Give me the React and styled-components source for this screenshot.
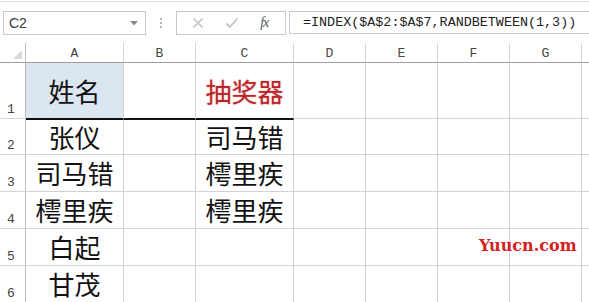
import React from "react";
import styled, { createGlobalStyle } from "styled-components";

const GlobalStyle = createGlobalStyle`
  html, body {
    margin: 0;
    padding: 0;
    background: #fff;
    overflow: hidden;
  }
  body {
    font-family: "Noto Sans CJK SC", "Noto Sans", sans-serif;
  }
`;

const columns = ["A", "B", "C", "D", "E", "F", "G"];
const colWidths = [98, 72, 98, 72, 72, 72, 72];
const rowHeights = [56, 36, 37, 37, 37, 37];

const data = [
  ["姓名", "", "抽奖器"],
  ["张仪", "", "司马错"],
  ["司马错", "", "樗里疾"],
  ["樗里疾", "", "樗里疾"],
  ["白起", "", ""],
  ["甘茂", "", ""],
];

function Sheet() {
  return (
    <Page>
      <GlobalStyle />
      <Toolbar>
        <NameBox>
          <span>C2</span>
          <svg width="8" height="5" viewBox="0 0 8 5">
            <path d="M0 0 L8 0 L4 4.5 Z" fill="#8a8a8a" />
          </svg>
        </NameBox>
        <Grip>
          <i />
          <i />
          <i />
        </Grip>
        <ButtonBox>
          <svg width="12" height="12" viewBox="0 0 12 12">
            <path d="M1.5 1.5 L10.5 10.5 M10.5 1.5 L1.5 10.5" stroke="#c4c4c4" strokeWidth="1.6" />
          </svg>
          <svg width="14" height="12" viewBox="0 0 14 12">
            <path d="M1.5 6.5 L5 10 L12.5 1.5" stroke="#c4c4c4" strokeWidth="1.8" fill="none" />
          </svg>
          <Fx>fx</Fx>
        </ButtonBox>
        <FormulaBox>=INDEX($A$2:$A$7,RANDBETWEEN(1,3))</FormulaBox>
      </Toolbar>
      <Grid>
        <Corner>
          <svg width="9" height="9" viewBox="0 0 9 9">
            <path d="M9 0 L9 9 L0 9 Z" fill="#dadada" />
          </svg>
        </Corner>
        {columns.map((c) => (
          <ColHead key={c}>{c}</ColHead>
        ))}
        <ColHead $last />
        {data.map((row, r) => (
          <React.Fragment key={r}>
            <RowHead>{r + 1}</RowHead>
            {columns.map((c, ci) => {
              const text = row[ci] || "";
              return (
                <Cell
                  key={c}
                  $bg={r === 0 && ci === 0 ? "#dce6f1" : "transparent"}
                  $red={r === 0 && ci === 2}
                  $thick={r === 0 && ci <= 2}
                >
                  {text}
                </Cell>
              );
            })}
            <Cell $last />
          </React.Fragment>
        ))}
        <Watermark>Yuucn.com</Watermark>
      </Grid>
    </Page>
  );
}

export default function App() {
  return <Sheet />;
}

const Page = styled.div`
  width: 589px;
  height: 302px;
  overflow: hidden;
  background: #fff;
`;

const Toolbar = styled.div`
  height: 42px;
  border-top: 1px solid #dcdcdc;
  margin-top: 1px;
  box-sizing: border-box;
  display: flex;
  align-items: flex-start;
  padding: 9px 0 0 3px;
`;

const NameBox = styled.div`
  width: 143px;
  height: 24px;
  box-sizing: border-box;
  border: 1px solid #c8c8c8;
  display: flex;
  align-items: center;
  justify-content: space-between;
  padding: 0 7px 0 5px;
  font-family: "Liberation Sans", Arial, sans-serif;
  font-size: 14px;
  color: #3a3a3a;
`;

const Grip = styled.div`
  width: 30px;
  height: 24px;
  display: flex;
  flex-direction: column;
  align-items: center;
  justify-content: center;
  gap: 2px;
  i {
    width: 2px;
    height: 2px;
    background: #b8b8b8;
  }
`;

const ButtonBox = styled.div`
  width: 110px;
  height: 24px;
  box-sizing: border-box;
  border: 1px solid #c8c8c8;
  display: flex;
  align-items: center;
  justify-content: space-around;
  padding: 0 6px 0 4px;
`;

const Fx = styled.span`
  font-family: "Liberation Serif", "Times New Roman", serif;
  font-style: italic;
  font-size: 14px;
  color: #555;
  letter-spacing: -1px;
`;

const FormulaBox = styled.div`
  flex: 1;
  margin-left: 3px;
  height: 23px;
  margin-top: 0;
  box-sizing: border-box;
  border: 1px solid #c8c8c8;
  border-right: none;
  display: flex;
  align-items: center;
  padding-left: 13px;
  font-family: "Liberation Mono", "Courier New", monospace;
  font-size: 13.4px;
  color: #222;
  white-space: nowrap;
`;

const Grid = styled.div`
  position: relative;
  display: grid;
  grid-template-columns: 26px ${colWidths.map((w) => `${w}px`).join(" ")} 1fr;
  grid-template-rows: 20px ${rowHeights.map((h) => `${h}px`).join(" ")};
`;

const Corner = styled.div`
  border-right: 1px solid #bdbdbd;
  border-bottom: 1px solid #9e9e9e;
  display: flex;
  align-items: flex-end;
  justify-content: flex-end;
  padding: 0 3px 3px 0;
`;

const ColHead = styled.div`
  border-right: ${(p) => (p.$last ? "none" : "1px solid #d6d6d6")};
  border-bottom: 1px solid #9e9e9e;
  display: flex;
  align-items: center;
  justify-content: center;
  padding-top: 2px;
  font-family: "Liberation Mono", "Courier New", monospace;
  font-size: 13px;
  color: #444;
`;

const RowHead = styled.div`
  border-right: 1px solid #bdbdbd;
  border-bottom: 1px solid #d6d6d6;
  display: flex;
  align-items: flex-end;
  padding: 0 0 0 7px;
  font-family: "Liberation Mono", "Courier New", monospace;
  font-size: 13px;
  line-height: 16px;
  color: #444;
`;

const Cell = styled.div`
  background: ${(p) => p.$bg || "transparent"};
  border-right: ${(p) => (p.$last ? "none" : "1px solid #d2d0d8")};
  border-bottom: ${(p) => (p.$thick ? "2px solid #111" : "1px solid #d2d0d8")};
  margin-bottom: ${(p) => (p.$thick ? "-1px" : "0")};
  position: relative;
  z-index: ${(p) => (p.$thick ? 1 : 0)};
  display: flex;
  align-items: center;
  justify-content: center;
  font-size: 26px;
  line-height: 1;
  color: ${(p) => (p.$red ? "#b8262a" : "#111")};
  text-shadow: ${(p) => (p.$red ? "0 0 2px rgba(225, 90, 90, 0.55)" : "none")};
  white-space: nowrap;
`;

const Watermark = styled.div`
  position: absolute;
  left: 479px;
  top: 193px;
  font-family: "DejaVu Serif", "Liberation Serif", serif;
  font-weight: bold;
  font-size: 16px;
  color: #d42020;
`;
